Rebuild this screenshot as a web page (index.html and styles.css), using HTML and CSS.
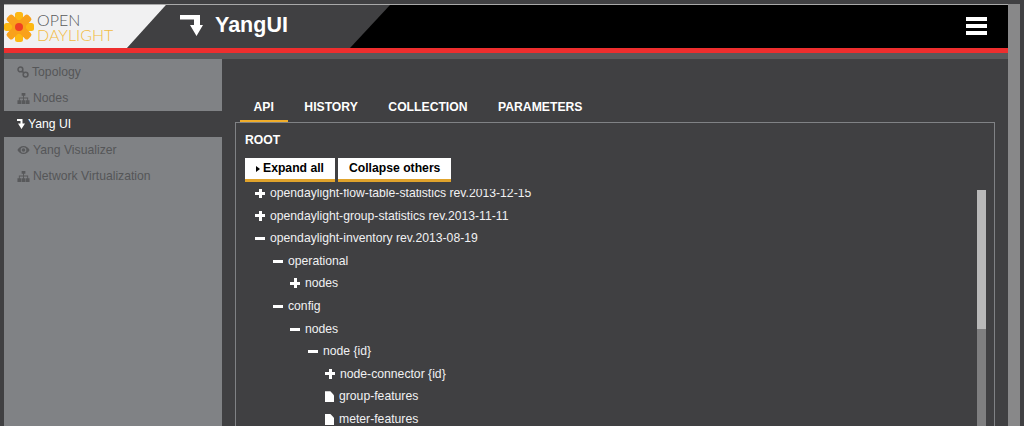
FILE: index.html
```html
<!DOCTYPE html>
<html lang="en">
<head>
    <title>YangUI - OpenDaylight</title>
    <link rel="stylesheet" href="styles.css">
</head>
<body>
    <div class="page">
        <header class="topbar">
            <div class="logo">
                <svg class="logo-flower" viewBox="-15 -15 30 30" width="30" height="30">
                    <g fill="#fdb813">
                        <rect x="-4" y="-15" width="8" height="12" rx="2.500"/>
                        <rect x="-4" y="-15" width="8" height="12" rx="2.500" transform="rotate(90)"/>
                        <rect x="-4" y="-15" width="8" height="12" rx="2.500" transform="rotate(180)"/>
                        <rect x="-4" y="-15" width="8" height="12" rx="2.500" transform="rotate(270)"/>
                    </g>
                    <g fill="#f9a11b">
                        <rect x="-4" y="-15" width="8" height="12" rx="2.500" transform="rotate(45)"/>
                        <rect x="-4" y="-15" width="8" height="12" rx="2.500" transform="rotate(135)"/>
                        <rect x="-4" y="-15" width="8" height="12" rx="2.500" transform="rotate(225)"/>
                        <rect x="-4" y="-15" width="8" height="12" rx="2.500" transform="rotate(315)"/>
                    </g>
                    <circle r="7" fill="#f9a11b"/>
                    <circle r="4" fill="#ef4123"/>
                </svg>
                <div class="logo-text">
                    <span class="logo-open">OPEN</span>
                    <span class="logo-day">DAYLIGHT</span>
                </div>
            </div>
            <div class="brand">
                <svg class="brand-icon" viewBox="0 0 23 21" width="23" height="21">
                    <path d="M0 0h20v10h3L16.500 21 10 10h4V4.500H0z" fill="#fff"/>
                </svg>
                <span class="brand-title">YangUI</span>
            </div>
            <button class="menu-btn" type="button">
                <span></span><span></span><span></span>
            </button>
        </header>
        <div class="red-line"></div>
        <div class="grey-line"></div>

        <div class="content">
            <nav class="sidebar">
                <a class="nav-item">
                    <svg class="nav-icon" viewBox="0 0 14 14" width="12" height="12"><g fill="none" stroke="#58595b" stroke-width="1.8"><circle cx="4" cy="4" r="2.800"/><circle cx="10" cy="10" r="2.800"/><path d="M6 6l2 2"/></g></svg>
                    Topology
                </a>
                <a class="nav-item">
                    <svg class="nav-icon" viewBox="0 0 14 14" width="13" height="13"><path d="M5 1h4v3H7.500v2H12v3h1.500v4h-4V9H11V7H7.500v2H9v4H5V9h1.500V7H3v2h1.500v4h-4V9H2V6h4.500V4H5z" fill="#58595b"/></svg>
                    Nodes
                </a>
                <a class="nav-item active">
                    <svg class="nav-icon" viewBox="0 0 8 10" width="8" height="10"><path d="M0 0h5.500v4.500H8L4.500 10 1 4.500h2.500V2H0z" fill="#fff"/></svg>
                    Yang UI
                </a>
                <a class="nav-item">
                    <svg class="nav-icon" viewBox="0 0 16 12" width="13" height="10"><path d="M8 1C4.500 1 1.800 3.500.5 6 1.800 8.500 4.500 11 8 11s6.200-2.500 7.500-5C14.200 3.500 11.500 1 8 1zm0 8.500A3.500 3.500 0 1 1 8 2.500a3.500 3.500 0 0 1 0 7z" fill="#58595b"/><circle cx="8" cy="6" r="2.200" fill="#58595b"/></svg>
                    Yang Visualizer
                </a>
                <a class="nav-item">
                    <svg class="nav-icon" viewBox="0 0 14 14" width="13" height="13"><path d="M5 1h4v3H7.500v2H12v3h1.500v4h-4V9H11V7H7.500v2H9v4H5V9h1.500V7H3v2h1.500v4h-4V9H2V6h4.500V4H5z" fill="#58595b"/></svg>
                    Network Virtualization
                </a>
            </nav>

            <main class="main">
                <ul class="tabs">
                    <li class="tab active">API</li>
                    <li class="tab">HISTORY</li>
                    <li class="tab">COLLECTION</li>
                    <li class="tab">PARAMETERS</li>
                </ul>
                <section class="panel">
                    <h3 class="panel-title">ROOT</h3>
                    <div class="panel-buttons">
                        <button class="btn" type="button"><span class="caret"></span>Expand all</button>
                        <button class="btn" type="button">Collapse others</button>
                    </div>
                    <div class="tree-wrap">
                        <ul class="tree">
                            <li class="row lvl0 plus">opendaylight-flow-table-statistics rev.2013-12-15</li>
                            <li class="row lvl0 plus">opendaylight-group-statistics rev.2013-11-11</li>
                            <li class="row lvl0 minus">opendaylight-inventory rev.2013-08-19</li>
                            <li class="row lvl1 minus">operational</li>
                            <li class="row lvl2 plus">nodes</li>
                            <li class="row lvl1 minus">config</li>
                            <li class="row lvl2 minus">nodes</li>
                            <li class="row lvl3 minus">node {id}</li>
                            <li class="row lvl4 plus">node-connector {id}</li>
                            <li class="row lvl4 file">group-features</li>
                            <li class="row lvl4 file">meter-features</li>
                        </ul>
                        <div class="tree-scroll"><div class="tree-thumb"></div></div>
                    </div>
                </section>
            </main>
        </div>
    </div>
    <div class="page-scroll"></div>
</body>
</html>
```

FILE: styles.css
```css
html, body {
    margin: 0;
    height: 100%;
    overflow: hidden;
}
body {
    display: flex;
    height: 426px;
    padding-left: 4px;
    box-sizing: border-box;
    background: #404042;
    font-family: "Liberation Sans", Arial, sans-serif;
    color: #fff;
}
.page {
    width: 1004px;
    display: flex;
    flex-direction: column;
}
.page-scroll {
    width: 12px;
    margin-top: 4px;
    background: #888889;
}

/* header */
.topbar {
    height: 43px;
    margin-top: 4px;
    border-top: 1px solid #a9a9a9;
    display: flex;
    background: #000;
}
.logo {
    width: 162px;
    margin-right: -39px;
    display: flex;
    align-items: center;
    gap: 3px;
    padding: 1px 0 0;
    box-sizing: border-box;
    background: #f1f1f2;
    clip-path: polygon(0 0, 100% 0, 123px 100%, 0 100%);
    position: relative;
    z-index: 1;
}
.logo-text {
    display: flex;
    flex-direction: column;
    font-family: Lato, "Liberation Sans", sans-serif;
    font-weight: 300;
    font-size: 16px;
    line-height: 15px;
}
.logo-open {
    color: #58595b;
}
.logo-day {
    color: #f2bb3f;
}
.brand {
    width: 263px;
    display: flex;
    align-items: center;
    padding: 0 0 2px 53px;
    box-sizing: border-box;
    background: #404042;
    clip-path: polygon(39px 0, 100% 0, 223px 100%, 0 100%);
}
.brand-icon {
    margin-right: 12px;
}
.brand-title {
    font-size: 21.500px;
    font-weight: bold;
}
.menu-btn {
    margin: 12px 21px 0 auto;
    width: 21px;
    height: 18px;
    padding: 0;
    border: none;
    background: none;
    display: flex;
    flex-direction: column;
    gap: 3px;
}
.menu-btn span {
    display: block;
    height: 4px;
    background: #fff;
}
.red-line {
    height: 5px;
    background: #ee2e2e;
}
.grey-line {
    height: 6px;
    background: #58595b;
}

/* sidebar */
.content {
    flex: 1;
    display: flex;
    min-height: 0;
}
.sidebar {
    width: 218px;
    flex: none;
    background: #808285;
}
.nav-item {
    height: 26px;
    display: flex;
    align-items: center;
    padding-left: 13px;
    gap: 3px;
    font-size: 12.200px;
    color: #555658;
}
.nav-item.active {
    background: #404042;
    color: #fff;
}

/* tabs */
.main {
    flex: 1;
    min-width: 0;
    padding: 36px 13px 0;
}
.tabs {
    display: flex;
    gap: 2.500px;
    list-style: none;
    margin: 0;
    padding: 0 0 0 4.500px;
}
.tab {
    height: 27px;
    padding: 0 14px;
    font-size: 12.200px;
    font-weight: bold;
    line-height: 24px;
}
.tab.active {
    border-bottom: 2px solid #f0ad2a;
    height: 25px;
}

/* panel */
.panel {
    height: 320px;
    border: 1px solid #808285;
    padding-left: 9px;
}
.panel-title {
    margin: 10px 0 0;
    font-size: 12.200px;
    line-height: 14px;
}
.panel-buttons {
    display: flex;
    gap: 3px;
    margin-top: 11px;
}
.btn {
    height: 24px;
    padding: 0 11px 1px;
    border: none;
    border-bottom: 3px solid #e0a32c;
    background: #fff;
    color: #000;
    font-family: inherit;
    font-size: 12.200px;
    font-weight: bold;
}
.caret {
    display: inline-block;
    margin-right: 3px;
    border-left: 4px solid #000;
    border-top: 3.500px solid transparent;
    border-bottom: 3.500px solid transparent;
}
.tree-wrap {
    position: relative;
    height: 237px;
    margin: 7px 0 0 -9px;
    overflow: hidden;
}
.tree {
    list-style: none;
    margin: -7px 0 0;
    padding: 0;
}
.row {
    height: 22.600px;
    line-height: 22.600px;
    font-size: 12.200px;
    position: relative;
    color: #f1f1f2;
}
.row::before {
    content: "";
    position: absolute;
}
.lvl0 { padding-left: 34px; }
.lvl1 { padding-left: 52px; }
.lvl2 { padding-left: 69px; }
.lvl3 { padding-left: 87px; }
.lvl4 { padding-left: 104px; }
.lvl4.file { padding-left: 103px; }
.lvl0::before { left: 19px; }
.lvl1::before { left: 37px; }
.lvl2::before { left: 54px; }
.lvl3::before { left: 72px; }
.lvl4::before { left: 89px; }
.minus::before {
    top: 10px;
    width: 10px;
    height: 3px;
    background: #fff;
}
.plus::before {
    top: 6px;
    width: 10px;
    height: 10px;
    background:
        linear-gradient(#fff, #fff) center / 10px 3px no-repeat,
        linear-gradient(#fff, #fff) center / 3px 10px no-repeat;
}
.file::before {
    top: 6px;
    width: 9px;
    height: 11px;
    background: #fff;
    clip-path: polygon(0 0, 60% 0, 100% 35%, 100% 100%, 0 100%);
}
.tree-scroll {
    position: absolute;
    top: 0;
    right: 8px;
    width: 9px;
    height: 100%;
    padding-top: 1px;
    box-sizing: border-box;
    background: linear-gradient(transparent 1px, #7f7f80 1px);
}
.tree-thumb {
    height: 139px;
    background: #b9b9b9;
}
```
